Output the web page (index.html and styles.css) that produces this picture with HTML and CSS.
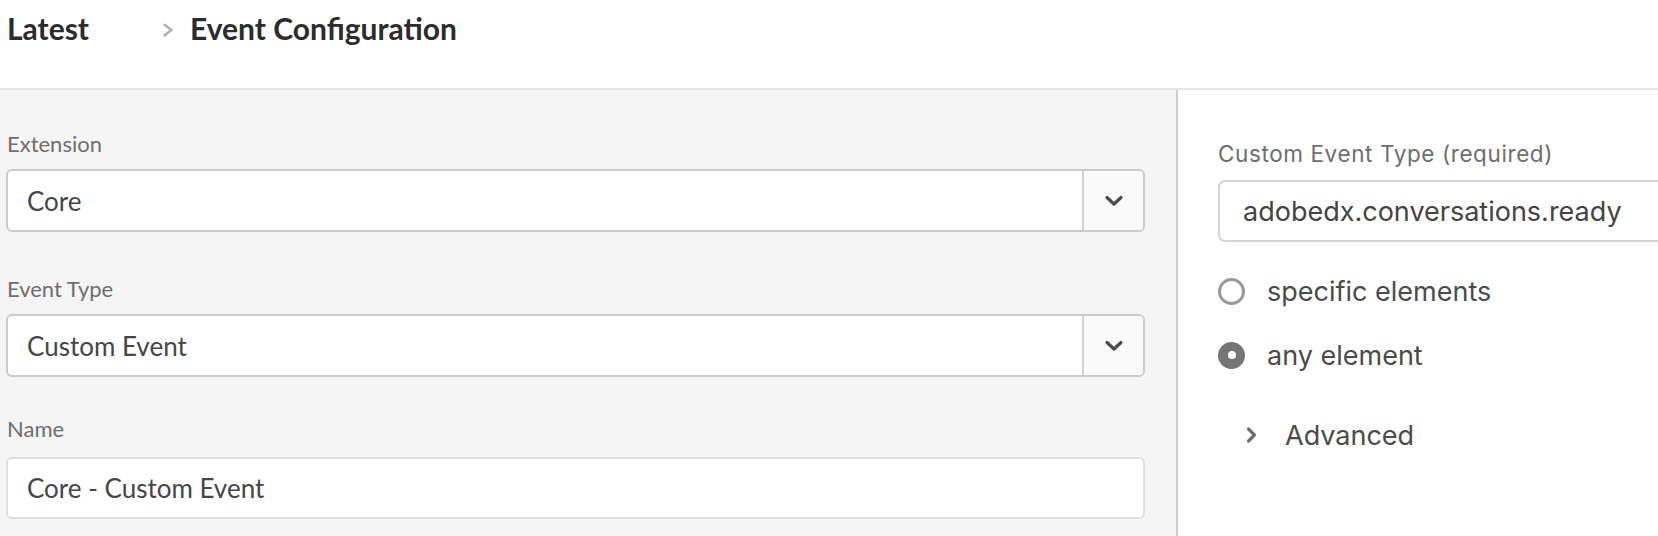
FILE: index.html
```html
<!DOCTYPE html>
<html lang="en">
<head>
<meta charset="utf-8">
<title>Event Configuration</title>
<link rel="stylesheet" href="styles.css">
</head>
<body>
<header class="topbar">
  <span class="crumb">Latest</span>
  <svg class="crumb-sep" width="12" height="14" viewBox="0 0 12 14" aria-hidden="true"><path d="M2.5 1.8 L9.5 7 L2.5 12.2" fill="none" stroke="#b0b0b0" stroke-width="2.4" stroke-linecap="round" stroke-linejoin="round"/></svg>
  <span class="crumb">Event Configuration</span>
</header>
<main class="layout">
  <section class="config">
    <div class="field-group">
      <label class="field-label">Extension</label>
      <div class="picker">
        <span class="picker-value">Core</span>
        <span class="picker-button"><svg width="20" height="12" viewBox="0 0 20 12" aria-hidden="true"><path d="M3 2.5 L10 9 L17 2.5" fill="none" stroke="#4b4b4b" stroke-width="3.2" stroke-linecap="round" stroke-linejoin="round"/></svg></span>
      </div>
    </div>
    <div class="field-group">
      <label class="field-label">Event Type</label>
      <div class="picker">
        <span class="picker-value">Custom Event</span>
        <span class="picker-button"><svg width="20" height="12" viewBox="0 0 20 12" aria-hidden="true"><path d="M3 2.5 L10 9 L17 2.5" fill="none" stroke="#4b4b4b" stroke-width="3.2" stroke-linecap="round" stroke-linejoin="round"/></svg></span>
      </div>
    </div>
    <div class="field-group field-group--text">
      <label class="field-label">Name</label>
      <div class="textfield">Core - Custom Event</div>
    </div>
  </section>
  <section class="settings">
    <label class="settings-label">Custom Event Type (required)</label>
    <div class="settings-input">adobedx.conversations.ready</div>
    <div class="radio-list">
      <div class="radio-row"><span class="radio"></span><span class="radio-text">specific elements</span></div>
      <div class="radio-row"><span class="radio radio--checked"></span><span class="radio-text">any element</span></div>
    </div>
    <div class="disclosure">
      <svg class="disclosure-icon" width="12" height="18" viewBox="0 0 12 18" aria-hidden="true"><path d="M2.5 3 L8.5 9 L2.5 15" fill="none" stroke="#707070" stroke-width="3.2" stroke-linecap="round" stroke-linejoin="round"/></svg>
      <span class="disclosure-text">Advanced</span>
    </div>
  </section>
</main>
</body>
</html>
```

FILE: styles.css
```css
* { box-sizing: border-box; }

html, body {
  margin: 0;
  height: 100%;
  overflow: hidden;
  background: #ffffff;
}

body {
  font-family: Lato, "Liberation Sans", sans-serif;
  color: #2c2c2c;
}

.topbar {
  height: 90px;
  border-bottom: 2px solid #e6e6e6;
  display: flex;
  align-items: flex-start;
  padding: 10px 0 0 7px;
  background: #ffffff;
}

.crumb {
  font-size: 30px;
  line-height: 36px;
  font-weight: 700;
  color: #2c2c2c;
}

.crumb-sep {
  margin: 13px 16px 0 73px;
  flex: none;
}

.layout {
  display: grid;
  grid-template-columns: 1178px 1fr;
  height: calc(100% - 90px);
}

.config {
  background: #f5f5f5;
  border-right: 2px solid #cdcdcd;
  padding: 40px 31px 0 6px;
  display: flex;
  flex-direction: column;
  gap: 43px;
}

.field-group {
  display: flex;
  flex-direction: column;
  gap: 11px;
}

.field-group--text {
  margin-top: -5px;
  gap: 14px;
}

.field-label {
  font-size: 22px;
  line-height: 28px;
  color: #6e6e6e;
  padding-left: 1px;
}

.picker {
  height: 63px;
  display: flex;
  border: 2px solid #cbcbcb;
  border-radius: 6px;
  background: #ffffff;
  overflow: hidden;
}

.picker-value {
  flex: 1;
  display: flex;
  align-items: center;
  padding-left: 19px;
  font-size: 26px;
  color: #464646;
}

.picker-button {
  width: 61px;
  flex: none;
  display: flex;
  align-items: center;
  justify-content: center;
  border-left: 2px solid #d2d2d2;
  background: #fafafa;
}

.textfield {
  height: 62px;
  display: flex;
  align-items: center;
  padding-left: 19px;
  border: 2px solid #e0e0e0;
  border-radius: 6px;
  background: #ffffff;
  font-size: 26px;
  color: #464646;
}

.settings {
  padding: 50px 0 0 40px;
  font-family: Inter, "Liberation Sans", sans-serif;
  overflow: hidden;
}

.settings-label {
  display: block;
  font-size: 22.5px;
  line-height: 28px;
  letter-spacing: 0.6px;
  color: #6e6e6e;
  margin-bottom: 12px;
}

.settings-input {
  width: 640px;
  height: 62px;
  display: flex;
  align-items: center;
  padding-left: 23px;
  border: 2px solid #d4d4d4;
  border-radius: 7px;
  font-size: 27px;
  color: #444444;
}

.radio-list {
  margin-top: 29px;
  display: flex;
  flex-direction: column;
  gap: 24px;
}

.radio-row {
  height: 40px;
  display: flex;
  align-items: center;
  gap: 22px;
}

.radio {
  width: 27px;
  height: 27px;
  border-radius: 50%;
  border: 3.5px solid #9a9a9a;
  flex: none;
  display: flex;
  align-items: center;
  justify-content: center;
}

.radio--checked {
  border-color: #757575;
  background: #757575;
}

.radio--checked::after {
  content: "";
  width: 8px;
  height: 8px;
  border-radius: 50%;
  background: #ffffff;
}

.radio-text {
  font-size: 27px;
  color: #4b4b4b;
}

.disclosure {
  margin-top: 40px;
  height: 40px;
  display: flex;
  align-items: center;
  padding-left: 28px;
  gap: 27px;
}

.disclosure-icon { flex: none; }

.disclosure-text {
  font-size: 27px;
  color: #4b4b4b;
}
```
